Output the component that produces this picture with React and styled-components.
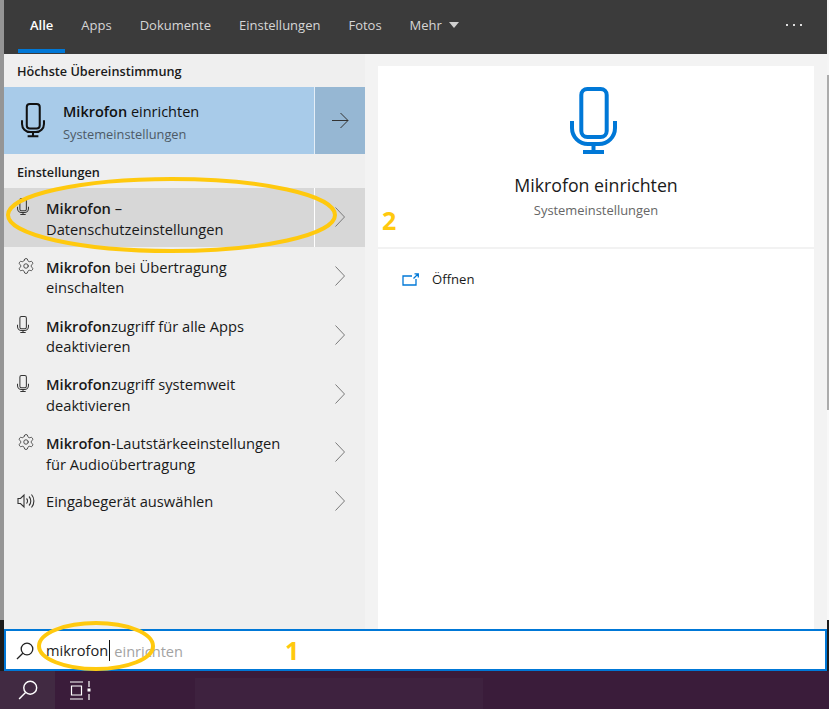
import React from 'react';
import styled, { createGlobalStyle } from 'styled-components';
import { Settings } from 'lucide-react';

const Global = createGlobalStyle`
    html, body {
        margin: 0;
        padding: 0;
        background: #fff;
    }
    * {
        box-sizing: border-box;
    }
`;

const Root = styled.div`
    position: relative;
    width: 829px;
    height: 709px;
    overflow: hidden;
    display: flex;
    flex-direction: column;
    padding: 0 2px 0 4px;
    font-family: "Open Sans", "Noto Sans", sans-serif;
    font-size: 14px;
    color: #111;
    background-color: #f5f5f5;
    background-image:
        linear-gradient(#959595 620px, #1c1c1c 620px),
        linear-gradient(#f5f5f5 75px, #acacac 75px, #acacac 410px, #f8f8f8 410px, #f8f8f8 620px, #1c1c1c 620px);
    background-size: 4px 100%, 2px 100%;
    background-position: left top, right top;
    background-repeat: no-repeat;
`;

const TopBar = styled.nav`
    height: 54px;
    flex: none;
    display: flex;
    align-items: stretch;
    justify-content: space-between;
    padding: 0 25px 0 14px;
    background: #3b3b3b;
`;

const Tabs = styled.div`
    display: flex;
    gap: 4px;
`;

const Tab = styled.div`
    display: flex;
    align-items: center;
    gap: 7px;
    height: 53px;
    padding: 1px 12px 0;
    font-size: 13px;
    color: ${p => (p.$active ? '#fff' : '#d6d6d6')};
    font-weight: ${p => (p.$active ? 600 : 400)};
    border-bottom: 4px solid ${p => (p.$active ? '#0078d7' : 'transparent')};
`;

const Caret = styled.span`
    width: 0;
    height: 0;
    border-left: 5.5px solid transparent;
    border-right: 5.5px solid transparent;
    border-top: 6px solid #d0d0d0;
`;

const Dots = styled.div`
    display: flex;
    align-items: center;
    gap: 5px;
    padding-bottom: 5px;
`;

const Dot = styled.i`
    width: 2px;
    height: 2px;
    background: #ddd;
`;

const Body = styled.div`
    flex: none;
    height: 575px;
    display: flex;
    background: #f3f3f3;
`;

const Results = styled.section`
    width: 361px;
    flex: none;
    background: #efefef;
`;

const Heading = styled.h2`
    margin: 0;
    height: ${p => p.$height}px;
    padding: ${p => p.$height - 25}px 0 0 13px;
    font-size: 12.7px;
    line-height: 18px;
    font-weight: 600;
    color: #1a1a1a;
`;

const BestRow = styled.div`
    display: flex;
    height: 67px;
    background: #a8cbe9;
`;

const BestMain = styled.div`
    width: 310px;
    display: flex;
    align-items: center;
    padding-left: 17px;
    gap: 18px;
`;

const BestText = styled.div`
    display: flex;
    flex-direction: column;
    gap: 1px;
    padding-top: 4px;
`;

const BestTitle = styled.div`
    font-size: 14.5px;
    line-height: 22px;
    b {
        font-weight: 600;
    }
`;

const BestSub = styled.div`
    font-size: 12.8px;
    line-height: 21px;
    color: #4d5a66;
`;

const ArrowCell = styled.div`
    flex: 1;
    display: flex;
    align-items: center;
    justify-content: center;
    border-left: 1px solid #e4eef7;
    background: #96b7d3;
`;

const Row = styled.div`
    display: flex;
    height: ${p => p.$height || 58.75}px;
    background: ${p => (p.$selected ? '#d7d7d7' : 'transparent')};
`;

const RowMain = styled.div`
    width: 310px;
    display: flex;
    align-items: ${p => (p.$single ? 'center' : 'flex-start')};
    padding: ${p => (p.$single ? '0' : '10px')} 0 0 13px;
`;

const IconSlot = styled.span`
    width: 29px;
    flex: none;
    display: flex;
    align-items: center;
    height: 18px;
    color: #333;
`;

const RowText = styled.div`
    font-size: 14.7px;
    line-height: 20.5px;
    color: #1a1a1a;
    b {
        font-weight: 600;
    }
`;

const ChevronCell = styled.div`
    flex: 1;
    display: flex;
    align-items: center;
    justify-content: center;
    border-left: ${p => (p.$selected ? '1px solid #fff' : '0')};
    color: #7a7a7a;
`;

const Preview = styled.section`
    width: 436px;
    margin: 12px 0 0 13px;
    background: #fff;
`;

const Hero = styled.div`
    height: 183px;
    display: flex;
    flex-direction: column;
    align-items: center;
    padding-top: 21px;
    color: #0078d7;
    border-bottom: 2px solid #f2f2f2;
`;

const HeroIcon = styled.div`
    margin-right: 5px;
    line-height: 0;
`;

const HeroTitle = styled.div`
    margin-top: 18px;
    font-size: 17.75px;
    line-height: 26px;
    color: #1a1a1a;
`;

const HeroSub = styled.div`
    margin-top: 2px;
    font-size: 12.9px;
    line-height: 20px;
    color: #666;
`;

const Action = styled.div`
    display: flex;
    align-items: center;
    gap: 13px;
    padding: 20px 0 0 24px;
    font-size: 13.1px;
    line-height: 20px;
    color: #1a1a1a;
`;

const SearchBox = styled.div`
    flex: none;
    height: 42px;
    display: flex;
    align-items: center;
    padding: 1px 0 0 10px;
    background: #fff;
    border: 2px solid #0078d7;
    font-size: 14.6px;
`;

const Typed = styled.span`
    margin-left: 12px;
    color: #222;
    border-right: 1px solid #111;
    padding-right: 1px;
    line-height: 21px;
`;

const Ghost = styled.span`
    margin-left: 4px;
    color: #a3a3a3;
`;

const TaskBar = styled.footer`
    flex: none;
    height: 38px;
    margin: 0 -2px 0 -4px;
    display: flex;
    background: #3a1c3a;
    color: #fff;
`;

const TaskButton = styled.div`
    width: ${p => p.$width}px;
    display: flex;
    align-items: center;
    justify-content: center;
    background: ${p => (p.$active ? '#412a42' : 'transparent')};
`;

const TaskTray = styled.div`
    align-self: flex-end;
    width: 288px;
    height: 31px;
    margin-left: 88px;
    background: #3e223f;
`;

const Marks = styled.svg`
    position: absolute;
    left: 0;
    top: 0;
    pointer-events: none;
`;

const Number = styled.span`
    position: absolute;
    left: ${p => p.$left}px;
    top: ${p => p.$top}px;
    font-family: "Open Sans", sans-serif;
    font-weight: 700;
    font-size: 25px;
    line-height: 32px;
    color: #ffc90e;
`;

const MicIcon = ({ width, stroke = 4 }) => (
    <svg width={width} viewBox="0 0 47 67" fill="none" stroke="currentColor" strokeWidth={stroke}>
        <rect x="11.3" y="2" width="25.4" height="48" rx="6" />
        <path d="M2 34V41a16 16 0 0 0 16 16H29a16 16 0 0 0 16-16V34" />
        <path d="M23.5 57V65M13 65H34" />
    </svg>
);

const Chevron = () => (
    <svg width="12" height="22" viewBox="0 0 12 22" fill="none" stroke="currentColor" strokeWidth="1">
        <path d="M1.5 1.5L10.5 11L1.5 20.5" />
    </svg>
);

const Arrow = () => (
    <svg width="17" height="17" viewBox="0 0 17 17" fill="none" stroke="#333" strokeWidth="1">
        <path d="M0 8.5H16M8.5 1L16 8.5L8.5 16" />
    </svg>
);

const Speaker = () => (
    <svg width="18" height="16" viewBox="0 0 18 16" fill="none" stroke="currentColor" strokeWidth="1.1">
        <path d="M1 5.5H3.5L7 2V14L3.5 10.5H1Z" />
        <path d="M9.5 5.5a3.5 3.5 0 0 1 0 5M12 3.5a6.5 6.5 0 0 1 0 9M14.5 1.5a10 10 0 0 1 0 13" />
    </svg>
);

const Magnifier = ({ size, color }) => (
    <svg width={size} height={size} viewBox="0 0 18 18" fill="none" stroke={color} strokeWidth="1.3">
        <circle cx="11" cy="7" r="5.8" />
        <path d="M6.8 11.2L1 17" />
    </svg>
);

const OpenIcon = () => (
    <svg width="17" height="13" viewBox="0 0 17 13" fill="none" stroke="#0078d7" strokeWidth="1.3">
        <path d="M10 3H1V12H14V6" />
        <path d="M11.5 5.5L16 1M12.5 0.8H16.3V4.5" />
    </svg>
);

const TaskViewIcon = () => (
    <svg width="22" height="19" viewBox="0 0 22 19" fill="none" stroke="#fff" strokeWidth="1.2">
        <path d="M0 1H13M0 18H13M1.5 5H11.5V14H1.5Z" />
        <path d="M19 0V6M19 13V19" />
        <rect x="17.5" y="7.5" width="3" height="3" fill="#fff" stroke="none" />
    </svg>
);

const rows = [
    { icon: 'mic', bold: 'Mikrofon', rest: ' –', line2: 'Datenschutzeinstellungen', selected: true },
    { icon: 'gear', bold: 'Mikrofon', rest: ' bei Übertragung', line2: 'einschalten' },
    { icon: 'mic', bold: 'Mikrofon', rest: 'zugriff für alle Apps', line2: 'deaktivieren' },
    { icon: 'mic', bold: 'Mikrofon', rest: 'zugriff systemweit', line2: 'deaktivieren' },
    { icon: 'gear', bold: 'Mikrofon', rest: '-Lautstärkeeinstellungen', line2: 'für Audioübertragung' },
];

const rowIcons = {
    mic: <MicIcon width={12} />,
    gear: <Settings size={18} strokeWidth={1.1} />,
};

function App() {
    return (
        <Root>
            <Global />
            <TopBar>
                <Tabs>
                    <Tab $active>Alle</Tab>
                    <Tab>Apps</Tab>
                    <Tab>Dokumente</Tab>
                    <Tab>Einstellungen</Tab>
                    <Tab>Fotos</Tab>
                    <Tab>Mehr<Caret /></Tab>
                </Tabs>
                <Dots><Dot /><Dot /><Dot /></Dots>
            </TopBar>
            <Body>
                <Results>
                    <Heading $height={33}>Höchste Übereinstimmung</Heading>
                    <BestRow>
                        <BestMain>
                            <MicIcon width={24} />
                            <BestText>
                                <BestTitle><b>Mikrofon</b> einrichten</BestTitle>
                                <BestSub>Systemeinstellungen</BestSub>
                            </BestText>
                        </BestMain>
                        <ArrowCell><Arrow /></ArrowCell>
                    </BestRow>
                    <Heading $height={34}>Einstellungen</Heading>
                    {rows.map((row, i) => (
                        <Row key={i} $selected={row.selected}>
                            <RowMain>
                                <IconSlot>{rowIcons[row.icon]}</IconSlot>
                                <RowText>
                                    <b>{row.bold}</b>{row.rest}<br />{row.line2}
                                </RowText>
                            </RowMain>
                            <ChevronCell $selected={row.selected}><Chevron /></ChevronCell>
                        </Row>
                    ))}
                    <Row $height={38.25}>
                        <RowMain $single>
                            <IconSlot><Speaker /></IconSlot>
                            <RowText>Eingabegerät auswählen</RowText>
                        </RowMain>
                        <ChevronCell><Chevron /></ChevronCell>
                    </Row>
                </Results>
                <Preview>
                    <Hero>
                        <HeroIcon><MicIcon width={47} /></HeroIcon>
                        <HeroTitle>Mikrofon einrichten</HeroTitle>
                        <HeroSub>Systemeinstellungen</HeroSub>
                    </Hero>
                    <Action><OpenIcon />Öffnen</Action>
                </Preview>
            </Body>
            <SearchBox>
                <Magnifier size={18} color="#222" />
                <Typed>mikrofon</Typed>
                <Ghost>einrichten</Ghost>
            </SearchBox>
            <TaskBar>
                <TaskButton $active $width={55}><Magnifier size={20} color="#fff" /></TaskButton>
                <TaskButton $width={52}><TaskViewIcon /></TaskButton>
                <TaskTray />
            </TaskBar>
            <Marks width="829" height="709" fill="none" stroke="#ffc90e" strokeWidth="4">
                <ellipse cx="171.5" cy="215" rx="163.5" ry="36" />
                <ellipse cx="96" cy="646" rx="57" ry="23" />
            </Marks>
            <Number $left={285} $top={634}>1</Number>
            <Number $left={382} $top={204}>2</Number>
        </Root>
    );
}

export default App;
